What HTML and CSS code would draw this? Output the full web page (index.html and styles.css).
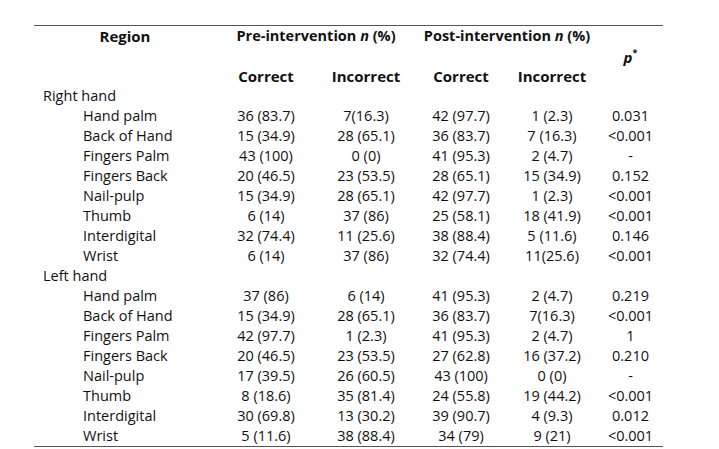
FILE: index.html
```html
<!DOCTYPE html>
<html lang="en">
<head>
<meta charset="utf-8">
<title>Hand hygiene regions</title>
<link rel="stylesheet" href="styles.css">
</head>
<body>
<div class="page">
<table class="results">
  <colgroup>
    <col class="c-region"><col class="c-pre1"><col class="c-pre2"><col class="c-post1"><col class="c-post2"><col class="c-p">
  </colgroup>
  <thead>
    <tr>
      <th class="region-h">Region</th>
      <th colspan="2" class="group-h">Pre-intervention <i>n</i> (%)</th>
      <th colspan="2" class="group-h">Post-intervention <i>n</i> (%)</th>
      <th rowspan="3" class="p-h"><i>p</i><sup>*</sup></th>
    </tr>
    <tr class="spacer"><th></th><th></th><th></th><th></th><th></th></tr>
    <tr>
      <th></th>
      <th>Correct</th><th>Incorrect</th>
      <th>Correct</th><th>Incorrect</th>
    </tr>
  </thead>
  <tbody>
    <tr class="section"><td>Right hand</td><td></td><td></td><td></td><td></td><td></td></tr>
    <tr><td>Hand palm</td><td>36 (83.7)</td><td>7(16.3)</td><td>42 (97.7)</td><td>1 (2.3)</td><td>0.031</td></tr>
    <tr><td>Back of Hand</td><td>15 (34.9)</td><td>28 (65.1)</td><td>36 (83.7)</td><td>7 (16.3)</td><td>&lt;0.001</td></tr>
    <tr><td>Fingers Palm</td><td>43 (100)</td><td>0 (0)</td><td>41 (95.3)</td><td>2 (4.7)</td><td>-</td></tr>
    <tr><td>Fingers Back</td><td>20 (46.5)</td><td>23 (53.5)</td><td>28 (65.1)</td><td>15 (34.9)</td><td>0.152</td></tr>
    <tr><td>Nail-pulp</td><td>15 (34.9)</td><td>28 (65.1)</td><td>42 (97.7)</td><td>1 (2.3)</td><td>&lt;0.001</td></tr>
    <tr><td>Thumb</td><td>6 (14)</td><td>37 (86)</td><td>25 (58.1)</td><td>18 (41.9)</td><td>&lt;0.001</td></tr>
    <tr><td>Interdigital</td><td>32 (74.4)</td><td>11 (25.6)</td><td>38 (88.4)</td><td>5 (11.6)</td><td>0.146</td></tr>
    <tr><td>Wrist</td><td>6 (14)</td><td>37 (86)</td><td>32 (74.4)</td><td>11(25.6)</td><td>&lt;0.001</td></tr>
    <tr class="section"><td>Left hand</td><td></td><td></td><td></td><td></td><td></td></tr>
    <tr><td>Hand palm</td><td>37 (86)</td><td>6 (14)</td><td>41 (95.3)</td><td>2 (4.7)</td><td>0.219</td></tr>
    <tr><td>Back of Hand</td><td>15 (34.9)</td><td>28 (65.1)</td><td>36 (83.7)</td><td>7(16.3)</td><td>&lt;0.001</td></tr>
    <tr><td>Fingers Palm</td><td>42 (97.7)</td><td>1 (2.3)</td><td>41 (95.3)</td><td>2 (4.7)</td><td>1</td></tr>
    <tr><td>Fingers Back</td><td>20 (46.5)</td><td>23 (53.5)</td><td>27 (62.8)</td><td>16 (37.2)</td><td>0.210</td></tr>
    <tr><td>Nail-pulp</td><td>17 (39.5)</td><td>26 (60.5)</td><td>43 (100)</td><td>0 (0)</td><td>-</td></tr>
    <tr><td>Thumb</td><td>8 (18.6)</td><td>35 (81.4)</td><td>24 (55.8)</td><td>19 (44.2)</td><td>&lt;0.001</td></tr>
    <tr><td>Interdigital</td><td>30 (69.8)</td><td>13 (30.2)</td><td>39 (90.7)</td><td>4 (9.3)</td><td>0.012</td></tr>
    <tr><td>Wrist</td><td>5 (11.6)</td><td>38 (88.4)</td><td>34 (79)</td><td>9 (21)</td><td>&lt;0.001</td></tr>
  </tbody>
</table>
</div>
</body>
</html>
```
FILE: styles.css
```css
html, body {
  margin: 0;
  padding: 0;
  background: #ffffff;
}
.page {
  padding: 25px 0 0 34px;
  font-family: "Open Sans", "Noto Sans", sans-serif;
  font-size: 14.5px;
  color: #111111;
}
.results {
  border-collapse: collapse;
  width: 629px;
  table-layout: fixed;
  border-top: 1px solid #555;
  border-bottom: 1px solid #555;
}
.c-region { width: 182px; }
.c-pre1 { width: 100px; }
.c-pre2 { width: 100px; }
.c-post1 { width: 90px; }
.c-post2 { width: 92px; }
.c-p { width: 65px; }
.results th,
.results td {
  padding: 0;
  height: 20px;
  line-height: 20px;
  text-align: center;
  white-space: nowrap;
  vertical-align: middle;
}
.results th {
  font-weight: 700;
  font-size: 15px;
}
.results th.group-h {
  font-size: 14.5px;
}
.results td:first-child {
  text-align: left;
  padding-left: 49px;
}
.results tr.section td:first-child {
  padding-left: 9px;
}
.results th.region-h {
  text-align: center;
}
.results th.p-h {
  padding-top: 2px;
}
.results sup {
  font-size: 9px;
  line-height: 0;
  vertical-align: 7px;
}
```
